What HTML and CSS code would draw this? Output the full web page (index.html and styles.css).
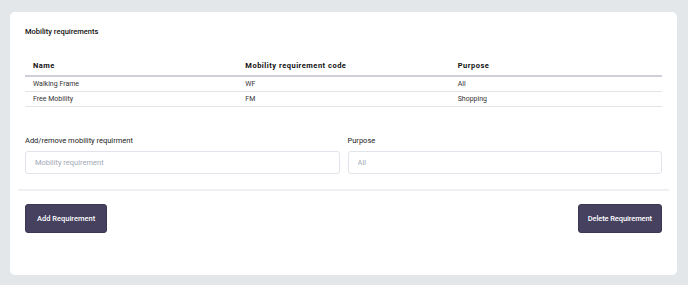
FILE: index.html
```html
<!DOCTYPE html>
<html>
<head>
<meta charset="utf-8">
<link rel="stylesheet" href="styles.css">
</head>
<body>
<div class="card">
  <h2 class="title">Mobility requirements</h2>
  <table class="table">
    <thead>
      <tr><th>Name</th><th>Mobility requirement code</th><th>Purpose</th></tr>
    </thead>
    <tbody>
      <tr><td>Walking Frame</td><td>WF</td><td>All</td></tr>
      <tr><td>Free Mobility</td><td>FM</td><td>Shopping</td></tr>
    </tbody>
  </table>
  <div class="form">
    <div class="field">
      <label class="label">Add/remove mobility requirment</label>
      <input class="input" placeholder="Mobility requirement">
    </div>
    <div class="field">
      <label class="label">Purpose</label>
      <input class="input" placeholder="All">
    </div>
  </div>
  <hr class="divider">
  <div class="actions">
    <button class="btn">Add Requirement</button>
    <button class="btn btn-wide">Delete Requirement</button>
  </div>
</div>
</body>
</html>
```
FILE: styles.css
```css
html, body {
  margin: 0;
  padding: 0;
}
body {
  background: #e4e7ea;
  font-family: Roboto, "Liberation Sans", sans-serif;
  color: #222;
  padding: 12px 11px 10px 10px;
  height: 285px;
  box-sizing: border-box;
}
.card {
  background: #fff;
  border-radius: 5px;
  height: 263px;
  box-sizing: border-box;
  padding: 15px 15px 0 15px;
}
.title {
  margin: 0;
  font-size: 7.5px;
  font-weight: 500;
  color: #111;
  line-height: 10px;
}
.table {
  width: 100%;
  border-collapse: collapse;
  margin-top: 18px;
  table-layout: fixed;
  font-size: 7px;
}
.table th {
  text-align: left;
  font-weight: 700;
  font-size: 7.5px;
  letter-spacing: 0.5px;
  color: #111;
  padding: 0 8px;
  height: 20px;
  border-bottom: 2px solid #cfd0d5;
}
.table td {
  padding: 0 8px;
  height: 14px;
  color: #333;
  border-bottom: 1px solid #e3e4e8;
}
.form {
  display: flex;
  gap: 8px;
  margin-top: 29px;
}
.field {
  flex: 1;
  display: flex;
  flex-direction: column;
}
.label {
  font-size: 7.5px;
  color: #222;
  line-height: 10px;
  margin-bottom: 5px;
}
.input {
  height: 23px;
  box-sizing: border-box;
  border: 1px solid #e1e4ea;
  border-radius: 3px;
  padding: 0 9px;
  font-family: inherit;
  font-size: 7.5px;
  outline: none;
}
.input::placeholder {
  color: #a3a9b6;
}
.divider {
  border: none;
  border-top: 2px solid #eef0f3;
  margin: 15px -7px 0 -7px;
}
.actions {
  display: flex;
  justify-content: space-between;
  margin-top: 13px;
}
.btn {
  background: #45415f;
  color: #fff;
  border: 1px solid #3a3752;
  border-radius: 3px;
  height: 29px;
  padding: 0 11px;
  font-family: inherit;
  font-size: 7.5px;
  font-weight: 500;
}
.btn-wide {
  padding: 0 9px;
  letter-spacing: -0.1px;
}
```
